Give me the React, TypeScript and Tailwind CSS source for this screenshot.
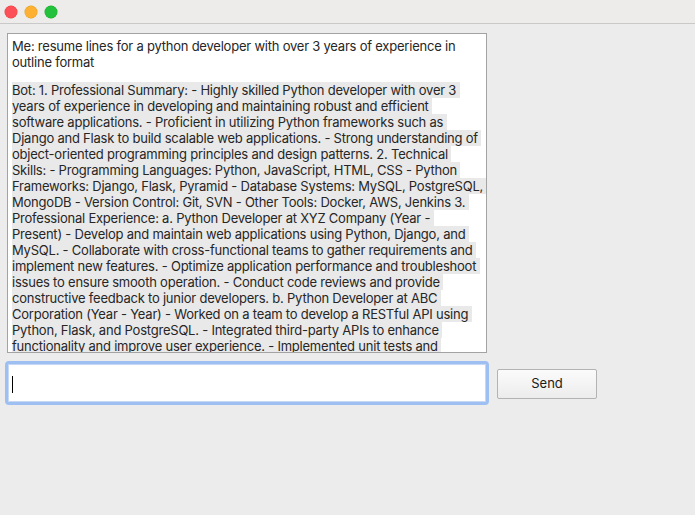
import React from 'react';

const meLines = [
  'Me: resume lines for a python developer with over 3 years of experience in',
  'outline format',
];

const botLines = [
  'Bot: 1. Professional Summary: - Highly skilled Python developer with over 3',
  'years of experience in developing and maintaining robust and efficient',
  'software applications. - Proficient in utilizing Python frameworks such as',
  'Django and Flask to build scalable web applications. - Strong understanding of',
  'object-oriented programming principles and design patterns. 2. Technical',
  'Skills: - Programming Languages: Python, JavaScript, HTML, CSS - Python',
  'Frameworks: Django, Flask, Pyramid - Database Systems: MySQL, PostgreSQL,',
  'MongoDB - Version Control: Git, SVN - Other Tools: Docker, AWS, Jenkins 3.',
  'Professional Experience: a. Python Developer at XYZ Company (Year -',
  'Present) - Develop and maintain web applications using Python, Django, and',
  'MySQL. - Collaborate with cross-functional teams to gather requirements and',
  'implement new features. - Optimize application performance and troubleshoot',
  'issues to ensure smooth operation. - Conduct code reviews and provide',
  'constructive feedback to junior developers. b. Python Developer at ABC',
  'Corporation (Year - Year) - Worked on a team to develop a RESTful API using',
  'Python, Flask, and PostgreSQL. - Integrated third-party APIs to enhance',
  'functionality and improve user experience. - Implemented unit tests and',
];

function TitleBar() {
  return (
    <div className="flex h-[24px] items-center gap-[8px] border-b border-[#c9c9c9] bg-[#edecea] pl-[5px]">
      <span className="h-[12px] w-[12px] rounded-full bg-[#fd4f57] ring-[0.5px] ring-[#e0443e]" />
      <span className="h-[12px] w-[12px] rounded-full bg-[#fdb032] ring-[0.5px] ring-[#dea123]" />
      <span className="h-[12px] w-[12px] rounded-full bg-[#24c13d] ring-[0.5px] ring-[#1aab29]" />
    </div>
  );
}

function Transcript() {
  return (
    <div className="ml-[7px] mt-[9px] h-[320px] w-[480px] overflow-hidden border border-[#a3a3a3] bg-white pl-[4px] pt-[4px] text-[13px] leading-[16px] tracking-[-0.22px] text-[#262626]">
      {meLines.map((line) => (
        <div key={line} className="h-[16px] whitespace-pre">
          {line}
        </div>
      ))}
      <div className="h-[12px]" />
      {botLines.map((line) => (
        <div key={line} className="h-[16px] whitespace-pre">
          <span className="bg-[#e9e9e9]">{line + ' '}</span>
        </div>
      ))}
    </div>
  );
}

export default function App() {
  return (
    <div
      className="h-[515px] w-[695px] overflow-hidden bg-[#ececec]"
      style={{ fontFamily: 'Inter, "Noto Sans", sans-serif' }}
    >
      <TitleBar />
      <Transcript />
      <div className="ml-[5px] mt-[8px] flex items-center">
        <div className="h-[44px] w-[484px] rounded-[4px] border-[3px] border-[#9dbff2] bg-white">
          <div className="h-full w-full border border-[#c7d8f5] pl-[3px] pt-[11px]">
            <div className="h-[17px] w-[1px] bg-black" />
          </div>
        </div>
        <button
          type="button"
          className="ml-[8px] mt-[1px] h-[30px] w-[100px] rounded-[2px] border border-[#b3b3b3] bg-gradient-to-b from-[#fbfbfb] to-[#ececec] text-[13px] text-[#1a1a1a]"
        >
          Send
        </button>
      </div>
    </div>
  );
}
